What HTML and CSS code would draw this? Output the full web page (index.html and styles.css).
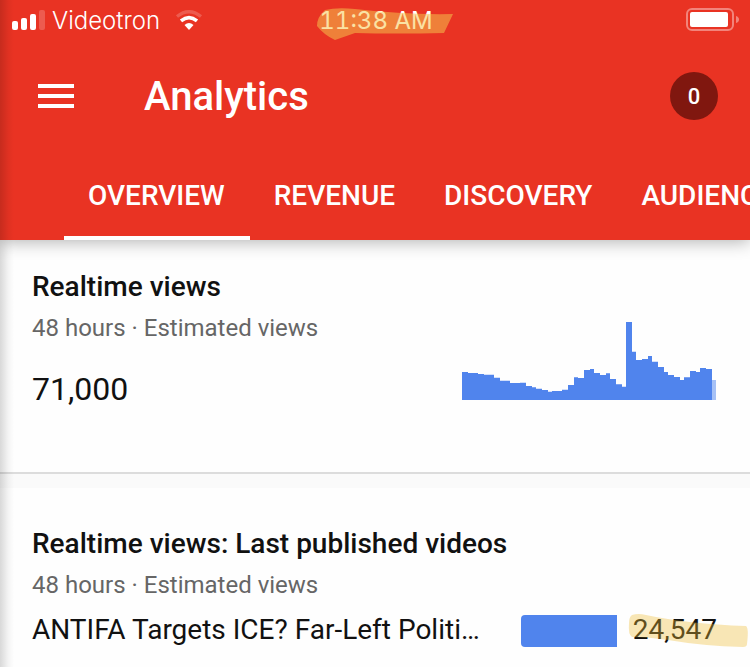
FILE: index.html
```html
<!DOCTYPE html>
<html lang="en">
<head>
    <meta charset="UTF-8">
    <meta name="viewport" content="width=device-width, initial-scale=1">
    <title>Analytics</title>
    <link rel="stylesheet" href="styles.css">
</head>
<body>
<header class="header">
    <div class="status">
        <div class="carrier">
            <svg width="34" height="20" viewBox="0 0 34 20" fill="#fff">
                <rect x="0" y="11" width="6" height="9" rx="2"/>
                <rect x="9" y="8" width="6" height="12" rx="2"/>
                <rect x="18" y="4" width="6" height="16" rx="2"/>
                <rect x="27" y="0" width="6" height="20" rx="2" opacity=".2"/>
            </svg>
            <span class="carrier-name">Videotron</span>
            <svg class="wifi" width="28" height="20" viewBox="0 0 28 20" fill="none">
                <path d="M2 6.5Q14 -3 26 6.5" stroke="#fff" stroke-width="3.4" opacity=".2"/>
                <path d="M6 10.8Q14 4.4 22 10.8" stroke="#fff" stroke-width="3.6"/>
                <path d="M9.500 15Q14 11 18.500 15L14 20Z" fill="#fff"/>
            </svg>
        </div>
        <div class="time">
            11:38 AM
            <svg class="marker marker-time" width="140" height="36" viewBox="0 0 140 36">
                <path d="M10 4Q22 1 40 3Q90 9 138 8L129 27Q80 28 40 27L20 34Q9 29 2 20Q2 11 10 4Z" fill="#f6c84f" fill-opacity=".52"/>
            </svg>
        </div>
        <svg class="battery" width="54" height="24" viewBox="0 0 54 24">
            <rect x="1" y="1" width="46" height="21" rx="5" fill="none" stroke="#fff" stroke-width="2" opacity=".4"/>
            <rect x="4" y="4" width="38" height="15" rx="2" fill="#fff"/>
            <path d="M50 8Q53 9 53 11.500Q53 14 50 15Z" fill="#fff" opacity=".4"/>
        </svg>
    </div>

    <div class="toolbar">
        <button type="button" class="menu" aria-label="Menu">
            <svg width="36" height="24" viewBox="0 0 36 24" fill="#fff">
                <rect y="0" width="36" height="4"/>
                <rect y="10" width="36" height="4"/>
                <rect y="20" width="36" height="4"/>
            </svg>
        </button>
        <h1>Analytics</h1>
        <button type="button" class="avatar">0</button>
    </div>

    <nav class="tabs">
        <button type="button" class="tab active">OVERVIEW</button>
        <button type="button" class="tab">REVENUE</button>
        <button type="button" class="tab">DISCOVERY</button>
        <button type="button" class="tab">AUDIENCE</button>
    </nav>
</header>

<main>
    <section class="card">
        <h2>Realtime views</h2>
        <p class="sub">48 hours · Estimated views</p>
        <div class="total">
            <span class="number">71,000</span>
            <svg class="chart" width="254" height="78" viewBox="36 36 762 234">
                <path fill="#5084ed" d="M36 270V186H54V189H84V192H102V194H132V203H150V212H180V219H210V218H228V228H246V232H258V236H276V240H294V245H306V243H336V239H354V225H372V202H384V204H402V180H420V177H432V189H450V195H468V190H480V207H498V223H516V230H528V36H546V125H558V150H576V147H594V138H606V155H624V171H642V186H654V195H672V201H690V210H702V202H720V183H738V186H750V174H768V177H786V270Z"/>
                <path fill="#a6c1f6" d="M786 210H798V270H786Z"/>
            </svg>
        </div>
    </section>

    <section class="card last">
        <h2>Realtime views: Last published videos</h2>
        <p class="sub">48 hours · Estimated views</p>
        <div class="video">
            <a href="#" class="video-title">ANTIFA Targets ICE? Far-Left Politi…</a>
            <span class="bar"></span>
            <span class="count">
                24,547
                <svg class="marker marker-count" width="122" height="38" viewBox="0 0 122 38">
                    <path d="M4 2Q10 0 18 2Q60 11 118 13Q121 15 119 31Q119 34 115 34Q75 33 40 27Q20 24 4 24Q0 22 1 10Q1 4 4 2Z" fill="#eebd35" fill-opacity=".36"/>
                </svg>
            </span>
        </div>
    </section>
</main>
</body>
</html>
```

FILE: styles.css
```css
* {
    box-sizing: border-box;
}

body {
    margin: 0;
    min-height: 100vh;
    position: relative;
    overflow-x: hidden;
    background: #fefefe;
    color: #111;
    font-family: Roboto, sans-serif;
}

/* soft shade down the left edge */
body::after {
    content: "";
    position: absolute;
    top: 0;
    bottom: 0;
    left: 0;
    width: 14px;
    background: linear-gradient(to right, rgba(0, 0, 0, 0.15), rgba(0, 0, 0, 0.04) 60%, transparent);
    pointer-events: none;
}

h1, h2, p {
    margin: 0;
    font-weight: 500;
}

button {
    border: none;
    padding: 0;
    background: none;
    color: #fff;
    font-family: inherit;
    font-weight: 500;
    cursor: pointer;
}

svg {
    display: block;
    flex: none;
}

.header {
    position: relative;
    background: #e93323;
    color: #fff;
    box-shadow: 0 2px 16px rgba(0, 0, 0, 0.3);
}

.status {
    display: grid;
    grid-template-columns: 1fr auto 1fr;
    align-items: center;
    height: 40px;
    padding: 0 10px 0 12px;
    font-family: Inter, sans-serif;
    font-size: 24px;
}

.carrier {
    display: flex;
    align-items: center;
}

.carrier-name {
    margin-left: 6px;
    font-weight: 300;
}

.wifi {
    margin-left: 15px;
}

.time {
    position: relative;
    font-variant-numeric: tabular-nums;
}

.battery {
    justify-self: end;
}

.marker {
    position: absolute;
    pointer-events: none;
}

.marker-time {
    top: 0;
    left: -4px;
}

.toolbar {
    display: flex;
    align-items: center;
    height: 112px;
    padding: 0 32px 0 38px;
}

.menu {
    margin-right: 70px;
}

.toolbar h1 {
    font-size: 40px;
}

.avatar {
    width: 48px;
    height: 48px;
    margin-left: auto;
    border-radius: 50%;
    background: #80170f;
    font-size: 22px;
}

.tabs {
    display: flex;
    height: 88px;
    padding-left: 64px;
    overflow: hidden;
}

.tab {
    flex: none;
    padding: 2px 25px 0 24px;
    border-bottom: 4px solid transparent;
    font-size: 28px;
}

.tab.active {
    border-bottom-color: #fff;
}

.card {
    padding: 26px 34px 72px 32px;
    border-bottom: 2px solid #dcdcdc;
}

.card h2 {
    font-size: 28px;
    line-height: 42px;
}

.sub {
    color: #666;
    font-size: 24px;
    font-weight: 400;
    line-height: 40px;
}

.total {
    display: flex;
    justify-content: space-between;
    align-items: flex-end;
    margin-top: -26px;
}

.number {
    font-size: 32px;
    line-height: 22px;
}

.last {
    margin-top: 14px;
    padding: 35px 33px 18px 32px;
    border-bottom: 0;
    box-shadow: 0 -14px #fafafa;
}

.video {
    display: flex;
    align-items: center;
    margin-top: 3px;
    font-size: 28px;
    line-height: 44px;
}

.video-title {
    flex: 1;
    overflow: hidden;
    color: inherit;
    text-decoration: none;
    text-overflow: ellipsis;
    white-space: nowrap;
}

.bar {
    width: 96px;
    height: 32px;
    margin: 2px 16px 0 32px;
    border-radius: 4px 0 0 4px;
    background: #5084ed;
}

.count {
    position: relative;
}

.marker-count {
    top: 5px;
    left: -5px;
}
```
